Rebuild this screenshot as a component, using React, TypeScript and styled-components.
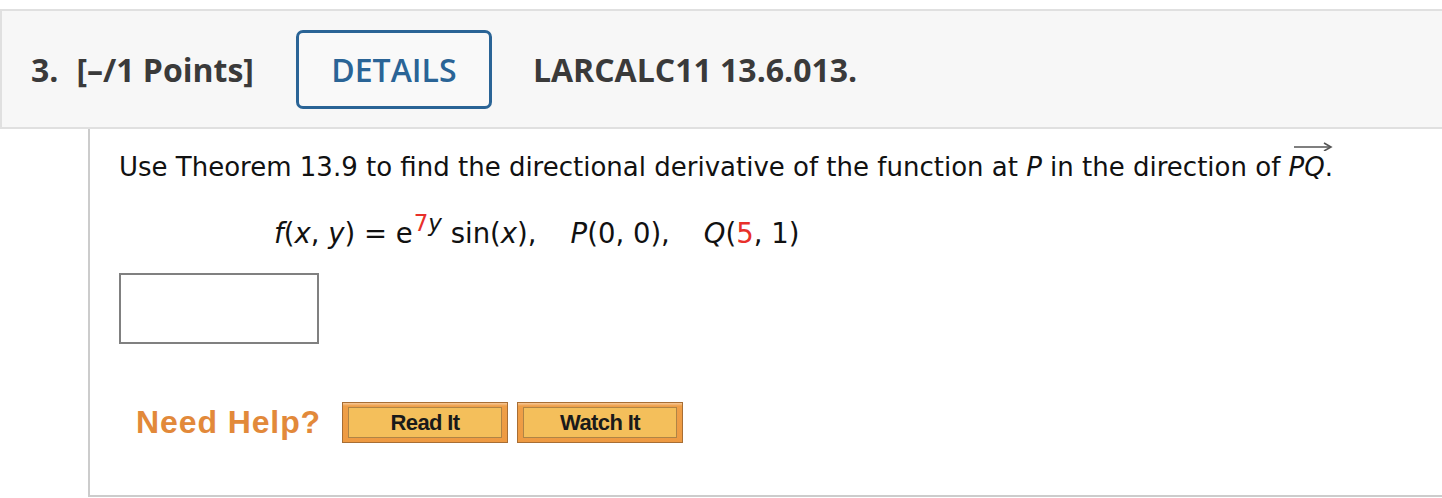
import styled, { createGlobalStyle } from "styled-components";

const GlobalStyle = createGlobalStyle`
  html, body {
    margin: 0;
    padding: 0;
    background: #ffffff;
    overflow: hidden;
  }
`;

export default function App() {
  return (
    <>
      <GlobalStyle />
      <Page>
        <Header>
          <Number>3.</Number>
          <Points>[–/1 Points]</Points>
          <DetailsButton>DETAILS</DetailsButton>
          <Code>LARCALC11 13.6.013.</Code>
        </Header>
        <Body>
          <Question>
            Use Theorem 13.9 to find the directional derivative of the function
            at <i>P</i> in the direction of{" "}
            <Vector>
              <i>PQ</i>
              <VectorArrow viewBox="0 0 40 10">
                <line x1="1" y1="6" x2="37" y2="6" stroke="#555" strokeWidth="1.6" />
                <path d="M31 2 L38 6 L31 10" fill="none" stroke="#555" strokeWidth="1.6" />
              </VectorArrow>
            </Vector>
            .
          </Question>
          <Formula>
            <Term>
              <i>f</i>(<i>x</i>, <i>y</i>) = e
              <Sup>
                <Red>7</Red>
                <i>y</i>
              </Sup>{" "}
              sin(<i>x</i>),
            </Term>
            <Term>
              <i>P</i>(0, 0),
            </Term>
            <Term>
              <i>Q</i>(<Red>5</Red>, 1)
            </Term>
          </Formula>
          <AnswerBox />
          <HelpRow>
            <HelpLabel>Need Help?</HelpLabel>
            <HelpButton>
              <HelpInner>Read It</HelpInner>
            </HelpButton>
            <HelpButton>
              <HelpInner>Watch It</HelpInner>
            </HelpButton>
          </HelpRow>
        </Body>
      </Page>
    </>
  );
}

const Page = styled.div`
  padding-top: 9px;
  width: 1442px;
`;

const Header = styled.div`
  display: flex;
  align-items: center;
  height: 116px;
  background: #f7f7f7;
  border: 2px solid #e0e0e0;
  border-right: none;
  padding-left: 29px;
  font-family: "Open Sans", sans-serif;
  font-weight: 700;
  font-size: 32px;
  color: #3a3a3a;
`;

const Number = styled.span`
  margin-right: 18px;
`;

const Points = styled.span`
  margin-right: 42px;
`;

const DetailsButton = styled.div`
  box-sizing: border-box;
  width: 196px;
  height: 79px;
  border: 3px solid #2a6496;
  border-radius: 7px;
  background: #f9f9f9;
  color: #2a6496;
  font-weight: 600;
  display: flex;
  align-items: center;
  justify-content: center;
  margin-right: 41px;
`;

const Code = styled.span``;

const Body = styled.div`
  margin-left: 88px;
  height: 366px;
  border-left: 2px solid #cccccc;
  border-bottom: 2px solid #cccccc;
  padding-left: 29px;
  font-family: "DejaVu Sans", Verdana, sans-serif;
  font-size: 26px;
  color: #111111;
`;

const Question = styled.div`
  padding-top: 20px;
  line-height: 36px;
`;

const Vector = styled.span`
  position: relative;
  display: inline-block;
`;

const VectorArrow = styled.svg`
  position: absolute;
  left: 4px;
  top: -8px;
  width: 40px;
  height: 10px;
`;

const Formula = styled.div`
  display: flex;
  gap: 34px;
  margin-top: 30px;
  padding-left: 155px;
  font-size: 27.5px;
  line-height: 36px;
`;

const Term = styled.span`
  white-space: pre;
`;

const Sup = styled.sup`
  font-size: 23px;
  vertical-align: 12px;
  line-height: 0;
  margin-left: 1px;
`;

const Red = styled.span`
  color: #e8302a;
`;

const AnswerBox = styled.div`
  margin-top: 22px;
  width: 196px;
  height: 67px;
  border: 2px solid #808080;
  background: #ffffff;
`;

const HelpRow = styled.div`
  display: flex;
  align-items: center;
  margin-top: 58px;
  padding-left: 17px;
`;

const HelpLabel = styled.span`
  font-family: "Liberation Sans", Arial, sans-serif;
  font-weight: 700;
  font-size: 32px;
  color: #e2893a;
  margin-right: 21px;
  letter-spacing: 0.9px;
`;

const HelpButton = styled.div`
  box-sizing: border-box;
  width: 166px;
  height: 41px;
  padding: 4px 5px;
  margin-right: 9px;
  border: 1px solid #a86e34;
  background: linear-gradient(#f6c99a 0px, #ef9f48 3px, #ee9a42 100%);
  display: flex;
`;

const HelpInner = styled.div`
  flex: 1;
  display: flex;
  align-items: center;
  justify-content: center;
  border: 1px solid #b08445;
  background: #f4bf5b;
  font-family: "Liberation Sans", Arial, sans-serif;
  font-weight: 700;
  font-size: 22px;
  letter-spacing: -0.6px;
  color: #1a1a1a;
`;
